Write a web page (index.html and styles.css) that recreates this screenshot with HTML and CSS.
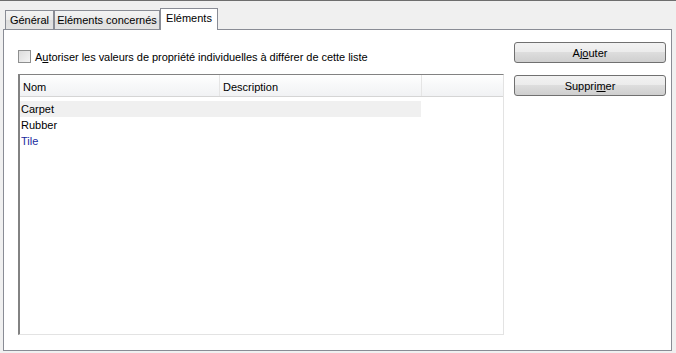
FILE: index.html
```html
<!DOCTYPE html>
<html lang="fr">
<head>
    <meta charset="UTF-8">
    <title>Eléments</title>
    <link rel="stylesheet" href="styles.css">
</head>
<body>
    <div class="fenetre">
        <div class="onglets">
            <div class="onglet onglet-general">Général</div>
            <div class="onglet onglet-concernes">Eléments concernés</div>
            <div class="onglet onglet-actif">Eléments</div>
        </div>
        <div class="panneau">
            <div class="gauche">
                <label class="option">
                    <span class="case"></span>
                    <span>A<u>u</u>toriser les valeurs de propriété individuelles à différer de cette liste</span>
                </label>
                <div class="liste">
                    <div class="entete">
                        <div class="col col-nom">Nom</div>
                        <div class="col col-desc">Description</div>
                        <div class="col col-vide"></div>
                    </div>
                    <div class="lignes">
                        <div class="ligne ligne-choisie">Carpet</div>
                        <div class="ligne">Rubber</div>
                        <div class="ligne ligne-bleue">Tile</div>
                    </div>
                </div>
            </div>
            <div class="droite">
                <button class="bouton">Aj<u>o</u>uter</button>
                <button class="bouton">Suppri<u>m</u>er</button>
            </div>
        </div>
    </div>
</body>
</html>
```

FILE: styles.css
```css
body {
    margin: 0;
    background: #f0f0f0;
    font-family: "Liberation Sans", Arial, sans-serif;
    font-size: 11px;
    color: #000;
}
.fenetre {
    width: 676px;
    height: 353px;
    border-top: 1px solid #6e6e6e;
    box-sizing: border-box;
    background: #f0f0f0;
}

/* onglets */
.onglets {
    display: flex;
    align-items: flex-end;
    height: 21px;
    margin-top: 7px;
    padding-left: 5px;
}
.onglet {
    box-sizing: border-box;
    height: 19px;
    line-height: 19px;
    text-align: center;
    border: 1px solid #898c95;
    border-bottom: none;
    background: linear-gradient(#f3f3f3, #ebebeb 50%, #dedede 50%, #e3e3e3);
}
.onglet-general {
    width: 49px;
}
.onglet-concernes {
    width: 106px;
}
.onglet-actif {
    width: 58px;
    height: 22px;
    line-height: 19px;
    margin-bottom: -1px;
    background: #fff;
    position: relative;
    z-index: 1;
}

/* panneau */
.panneau {
    display: flex;
    margin-left: 3px;
    width: 669px;
    height: 322px;
    box-sizing: border-box;
    border: 1px solid #898c95;
    background: #fff;
}
.gauche {
    width: 486px;
    margin-left: 14px;
    padding-top: 20px;
}
.option {
    display: flex;
    align-items: center;
    gap: 4px;
    height: 13px;
    letter-spacing: -0.04px;
}
.case {
    width: 11px;
    height: 11px;
    border: 1px solid #8e8f8f;
    background: linear-gradient(135deg, #dcdcdc, #f4f4f4);
}
.liste {
    margin-top: 11px;
    height: 261px;
    box-sizing: border-box;
    border: 1px solid #e3e3e3;
    border-top-color: #828282;
    border-left-color: #828282;
    border-left-width: 2px;
}
.entete {
    display: flex;
    height: 22px;
    box-sizing: border-box;
    border-bottom: 1px solid #d5d5d5;
    background: linear-gradient(#fff, #f7f8f9 50%, #f1f2f4);
}
.col {
    box-sizing: border-box;
    line-height: 24px;
    padding-left: 3px;
    border-right: 1px solid #e5e5e5;
}
.col-nom {
    width: 200px;
}
.col-desc {
    width: 202px;
}
.col-vide {
    flex: 1;
    border-right: none;
}
.lignes {
    padding-top: 4px;
}
.ligne {
    width: 400px;
    height: 16px;
    line-height: 16px;
    padding-left: 1px;
}
.ligne-choisie {
    background: #f0f0f0;
}
.ligne-bleue {
    color: #1a2ba0;
}

/* boutons */
.droite {
    display: flex;
    flex-direction: column;
    gap: 12px;
    margin-left: 10px;
    padding-top: 12px;
}
.bouton {
    width: 152px;
    height: 21px;
    padding: 0;
    font-family: inherit;
    font-size: 11px;
    color: #000;
    border: 1px solid #707070;
    border-radius: 3px;
    background: linear-gradient(#f2f2f2, #ebebeb 50%, #dddddd 50%, #cfcfcf);
}
```
